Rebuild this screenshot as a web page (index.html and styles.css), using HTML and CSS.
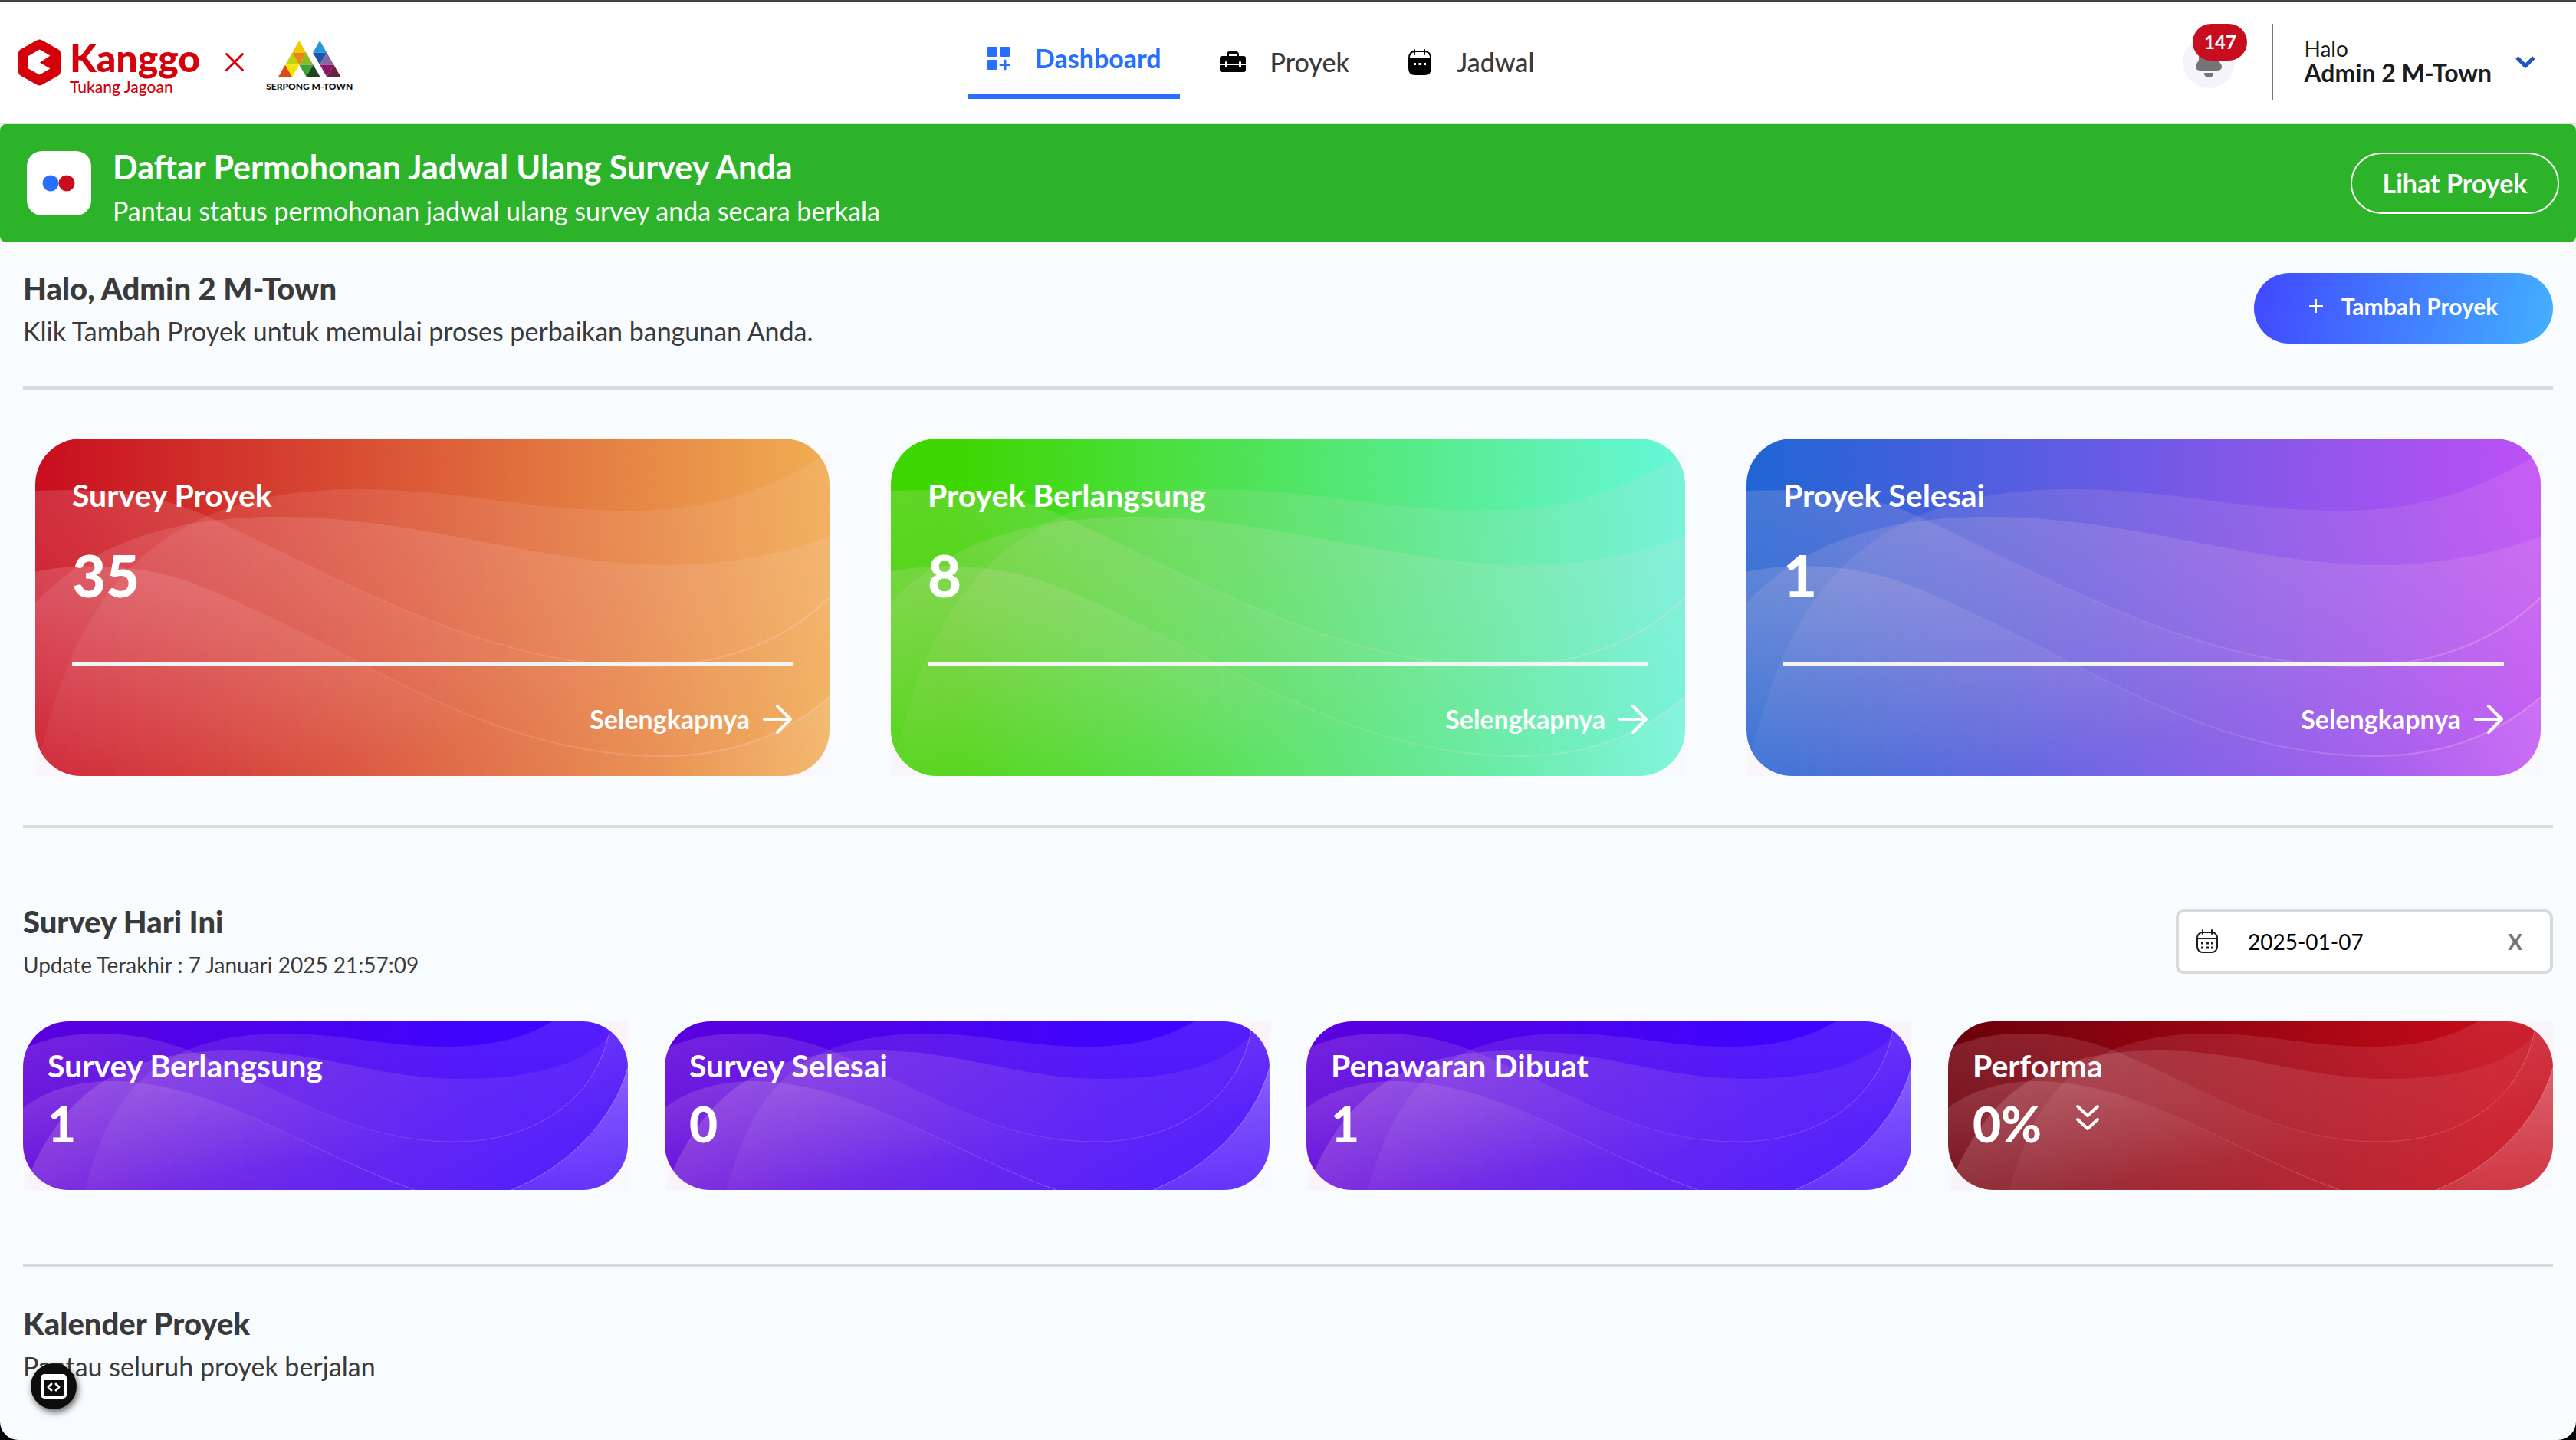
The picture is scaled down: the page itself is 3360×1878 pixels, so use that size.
FILE: index.html
```html
<!DOCTYPE html>
<html lang="id">
<head>
  <meta charset="utf-8">
  <meta name="viewport" content="width=device-width, initial-scale=1">
  <title>Kanggo - Dashboard</title>
  <link rel="stylesheet" href="styles.css">
</head>
<body>
  <!-- Shared wave artwork for the cards -->
  <svg class="defs" width="0" height="0" aria-hidden="true">
    <defs>
      <linearGradient id="fade-side" x1="0" y1="0" x2="0.6" y2="0.8">
        <stop offset="0" stop-color="#ffd8e0" stop-opacity="0.17"/>
        <stop offset="1" stop-color="#ffd8e0" stop-opacity="0"/>
      </linearGradient>
      <linearGradient id="fade-down" x1="0" y1="0" x2="0" y2="1">
        <stop offset="0" stop-color="#ffd0da" stop-opacity="0.12"/>
        <stop offset="1" stop-color="#ffd0da" stop-opacity="0.05"/>
      </linearGradient>
      <linearGradient id="fade-mid" x1="0" y1="0" x2="0" y2="1">
        <stop offset="0" stop-color="#ffd8e0" stop-opacity="0.14"/>
        <stop offset="1" stop-color="#ffd8e0" stop-opacity="0.04"/>
      </linearGradient>
      <linearGradient id="fade-left" x1="0" y1="0" x2="1" y2="0">
        <stop offset="0" stop-color="#ffd8e0" stop-opacity="0.18"/>
        <stop offset="1" stop-color="#ffd8e0" stop-opacity="0.06"/>
      </linearGradient>
      <linearGradient id="fade-line" x1="0" y1="0" x2="1" y2="0">
        <stop offset="0.2" stop-color="#ffd8e0" stop-opacity="0"/>
        <stop offset="1" stop-color="#ffd8e0" stop-opacity="0.3"/>
      </linearGradient>
      <linearGradient id="fade-right" x1="0" y1="0" x2="1" y2="0">
        <stop offset="0" stop-color="#ffffff" stop-opacity="0"/>
        <stop offset="1" stop-color="#ffffff" stop-opacity="0.1"/>
      </linearGradient>
      <linearGradient id="fade-corner" x1="0" y1="0" x2="0" y2="1">
        <stop offset="0" stop-color="#ffffff" stop-opacity="0.26"/>
        <stop offset="1" stop-color="#ffffff" stop-opacity="0.1"/>
      </linearGradient>
    </defs>
    <symbol id="waves-large" viewBox="0 0 1036 440" preserveAspectRatio="none">
      <path fill="url(#fade-down)" d="M0 440C40 260 110 66 419 66C560 66 640 94 776 94C880 94 960 66 1036 18V440Z"/>
      <path fill="url(#fade-mid)" d="M0 214C80 130 190 102 319 102C500 102 660 165 826 165C900 165 980 150 1036 127V440H0Z"/>
      <path fill="url(#fade-side)" d="M0 68C100 64 170 74 236 107C400 184 590 297 790 297C900 297 980 262 1036 207V440H0Z"/>
      <path fill="none" stroke="url(#fade-line)" stroke-width="2" d="M0 68C100 64 170 74 236 107C400 184 590 297 790 297C900 297 980 262 1036 207"/>
      <path fill="url(#fade-side)" d="M0 174C60 160 150 164 220 194C440 286 590 414 819 414C910 414 980 386 1036 337V440H0Z"/>
      <path fill="none" stroke="url(#fade-line)" stroke-width="2" d="M0 174C60 160 150 164 220 194C440 286 590 414 819 414C910 414 980 386 1036 337"/>
      <path fill="url(#fade-right)" d="M819 414C910 414 980 386 1036 337V440H819Z"/>
    </symbol>
    <symbol id="waves-small" viewBox="0 0 789 220" preserveAspectRatio="none">
      <path fill="url(#fade-down)" d="M80 220C110 120 150 16 340 16C420 16 470 33 551 33C605 33 650 24 691 0H789V220Z"/>
      <path fill="url(#fade-left)" d="M0 220C50 90 130 38 275 38C390 38 460 75 575 75C660 75 730 58 767 16L789 0V220Z"/>
      <path fill="url(#fade-side)" d="M0 36C30 22 60 16 99 16C140 16 180 23 219 39C340 90 430 157 562 157C680 157 756 90 767 0H789V220H0Z"/>
      <path fill="none" stroke="url(#fade-line)" stroke-width="1" d="M99 16C140 16 180 23 219 39C340 90 430 157 562 157C680 157 756 90 767 0"/>
      <path fill="url(#fade-side)" d="M0 113C30 90 70 78 115 78C250 78 370 170 511 220H0Z"/>
      <path fill="none" stroke="url(#fade-line)" stroke-width="1" d="M115 78C250 78 370 170 511 220"/>
      <path fill="url(#fade-corner)" d="M637 220C710 190 770 130 789 60V220Z"/>
      <path fill="none" stroke="#ffffff" stroke-opacity="0.3" stroke-width="1" d="M637 220C710 190 770 130 789 60"/>
    </symbol>
    <symbol id="arrow" viewBox="0 0 40 40">
      <path fill="none" stroke="currentColor" stroke-width="4" stroke-linecap="round" stroke-linejoin="round" d="M3 20H37M20 3L37 20L20 37"/>
    </symbol>
  </svg>

  <div class="app">
    <header class="header">
      <a class="brand" href="#">
        <svg class="brand-mark" width="55" height="61" viewBox="0 0 55 61" aria-hidden="true">
          <path fill="#d4000a" stroke="#d4000a" stroke-width="12" stroke-linejoin="round" d="M27.500 6.500L49 18.500V42.500L27.500 54.500L6 42.500V18.500Z"/>
          <path fill="#fff" d="M27.500 13.500L41.500 21.500L28 30.500L41.500 38.500L27.500 46.500L13 38.500V22Z"/>
        </svg>
        <span class="brand-text">
          <span class="brand-name">Kanggo</span>
          <span class="brand-tagline">Tukang Jagoan</span>
        </span>
        <svg class="brand-cross" width="26" height="26" viewBox="0 0 26 26" aria-hidden="true">
          <path stroke="#d4000a" stroke-width="3" stroke-linecap="round" d="M2.500 2.500L23.500 23.500M23.500 2.500L2.500 23.500"/>
        </svg>
        <span class="partner">
          <svg width="82" height="48" viewBox="0 0 82 48" aria-hidden="true">
            <path fill="#edcb00" d="M27.300 0L36.400 15.700H18.200Z"/>
            <path fill="#bfd00f" d="M18.200 15.700L27.300 31.400H9.100Z"/>
            <path fill="#eb8612" d="M18.200 15.700H36.400L27.300 31.400Z"/>
            <path fill="#8abb26" d="M36.400 15.700L45.500 31.400H27.300Z"/>
            <path fill="#dc4a1a" d="M9.100 31.400L18.200 47.200H0Z"/>
            <path fill="#f5e600" d="M9.100 31.400H27.300L18.200 47.200Z"/>
            <path fill="#43a237" d="M27.300 31.400H45.500L36.400 47.200Z"/>
            <path fill="#1b4620" d="M45.500 31.400L54.600 47.200H36.400Z"/>
            <path fill="#2797d8" d="M54.200 0L63.300 15.700H45.100Z"/>
            <path fill="#1a57a8" d="M45.100 15.700H63.300L54.200 31.400Z"/>
            <path fill="#86659f" d="M63.300 15.700L72.400 31.400H54.200Z"/>
            <path fill="#8f146e" d="M54.200 31.400H72.400L63.300 47.200Z"/>
            <path fill="#6a2340" d="M72.400 31.400L81.500 47.200H63.300Z"/>
          </svg>
          <span class="partner-name">SERPONG M-TOWN</span>
        </span>
      </a>

      <nav class="nav">
        <a class="nav-link nav-link-active" href="#">
          <svg width="32" height="32" viewBox="0 0 32 32" fill="currentColor" aria-hidden="true">
            <rect x="1" y="1" width="14" height="13" rx="2"/><rect x="18" y="1" width="14" height="13" rx="2"/><rect x="1" y="18" width="14" height="13" rx="2"/>
            <path fill="none" stroke="currentColor" stroke-width="3" stroke-linecap="round" d="M25 19V30M19 24.500H31"/>
          </svg>
          Dashboard
        </a>
        <a class="nav-link" href="#">
          <svg width="34" height="32" viewBox="0 0 34 32" aria-hidden="true">
            <path fill="none" stroke="#000" stroke-width="3" d="M10.500 10V6Q10.500 3.500 13 3.500H21Q23.500 3.500 23.500 6V10"/>
            <path fill="#000" d="M3 8H31Q34 8 34 11V18H28V16Q28 15 26.500 15Q25 15 25 16V18H10V16Q10 15 8.500 15Q7 15 7 16V18H0V11Q0 8 3 8Z"/>
            <path fill="#000" d="M0 20H7V22Q7 23 8.500 23Q10 23 10 22V20H25V22Q25 23 26.500 23Q28 23 28 22V20H34V26Q34 29 31 29H3Q0 29 0 26Z"/>
          </svg>
          Proyek
        </a>
        <a class="nav-link" href="#">
          <svg width="32" height="36" viewBox="0 0 32 36" aria-hidden="true">
            <path fill="none" stroke="#000" stroke-width="2" stroke-linecap="round" d="M9 2V8M22 2V8"/>
            <path fill="none" stroke="#000" stroke-width="2" d="M2 13Q2 4 10 4H22Q30 4 30 13"/>
            <path fill="#000" d="M1 13H31V26Q31 35 22 35H10Q1 35 1 26Z"/>
            <path fill="#fff" d="M8 19h3v3h-3zM14.500 19h3v3h-3zM21 19h3v3h-3z"/>
          </svg>
          Jadwal
        </a>
      </nav>

      <div class="account">
        <button class="bell" type="button" aria-label="Notifikasi">
          <svg width="36" height="44" viewBox="0 0 36 44" aria-hidden="true">
            <path fill="#757575" d="M18 2C26 2 30 8 30 14V20C30 24 35 25 35 30C35 34 32 35 28 35Q18 36 8 35C4 35 1 34 1 30C1 25 5 24 5 20V14C5 8 10 2 18 2Z"/>
            <path fill="#757575" d="M12 38H24Q24 44 18 44Q12 44 12 38Z"/>
          </svg>
          <span class="bell-count">147</span>
        </button>
        <button class="user" type="button">
          <span class="user-text">
            <span class="user-greeting">Halo</span>
            <strong class="user-name">Admin 2 M-Town</strong>
          </span>
          <svg width="28" height="20" viewBox="0 0 28 20" aria-hidden="true">
            <path fill="none" stroke="#1d55c4" stroke-width="5" stroke-linejoin="round" d="M3 4L14 15L25 4"/>
          </svg>
        </button>
      </div>
    </header>

    <section class="banner">
      <svg class="banner-icon" viewBox="0 0 84 84" aria-hidden="true">
        <circle cx="31" cy="42" r="10.500" fill="#2770ff"/><circle cx="52" cy="42" r="10.500" fill="#c80d1f"/>
      </svg>
      <div class="banner-text">
        <h2 class="banner-title">Daftar Permohonan Jadwal Ulang Survey Anda</h2>
        <p class="banner-note">Pantau status permohonan jadwal ulang survey anda secara berkala</p>
      </div>
      <button class="banner-button" type="button">Lihat Proyek</button>
    </section>

    <main class="main">
      <section class="greeting">
        <div class="heading-group">
          <h1 class="heading">Halo, Admin 2 M-Town</h1>
          <p class="note">Klik Tambah Proyek untuk memulai proses perbaikan bangunan Anda.</p>
        </div>
        <button class="add-button" type="button">
          <svg width="18" height="18" viewBox="0 0 18 18" aria-hidden="true"><path stroke="#fff" stroke-width="2" d="M9 0V18M0 9H18"/></svg>
          Tambah Proyek
        </button>
      </section>

      <section class="projects">
        <article class="project project-red">
          <svg class="waves" aria-hidden="true"><use href="#waves-large"/></svg>
          <h3 class="card-title">Survey Proyek</h3>
          <p class="project-value">35</p>
          <a class="project-link" href="#">Selengkapnya <svg width="40" height="40" aria-hidden="true"><use href="#arrow"/></svg></a>
        </article>
        <article class="project project-green">
          <svg class="waves" aria-hidden="true"><use href="#waves-large"/></svg>
          <h3 class="card-title">Proyek Berlangsung</h3>
          <p class="project-value">8</p>
          <a class="project-link" href="#">Selengkapnya <svg width="40" height="40" aria-hidden="true"><use href="#arrow"/></svg></a>
        </article>
        <article class="project project-blue">
          <svg class="waves" aria-hidden="true"><use href="#waves-large"/></svg>
          <h3 class="card-title">Proyek Selesai</h3>
          <p class="project-value">1</p>
          <a class="project-link" href="#">Selengkapnya <svg width="40" height="40" aria-hidden="true"><use href="#arrow"/></svg></a>
        </article>
      </section>

      <section class="today">
        <div class="today-head">
          <div class="heading-group">
            <h2 class="heading">Survey Hari Ini</h2>
            <p class="note note-small">Update Terakhir : 7 Januari 2025 21:57:09</p>
          </div>
          <div class="date-field">
            <label class="date-icon" for="survey-date" aria-label="Tanggal survey">
              <svg width="30" height="32" viewBox="0 0 30 32" fill="none" stroke="#1c1c1c" stroke-width="2" aria-hidden="true">
                <rect x="2" y="4" width="26" height="26" rx="7"/>
                <path d="M2 12H28"/><path stroke-linecap="round" d="M9 1V6M21 1V6"/>
                <path stroke-width="3" d="M7 18h3M14 18h3M20 18h3M7 24h3M14 24h3M20 24h3"/>
              </svg>
            </label>
            <input class="date-input" id="survey-date" type="text" value="2025-01-07">
            <button class="date-clear" type="button" aria-label="Hapus tanggal">X</button>
          </div>
        </div>

        <div class="stats">
          <article class="stat">
            <svg class="waves" aria-hidden="true"><use href="#waves-small"/></svg>
            <h3 class="card-title">Survey Berlangsung</h3>
            <p class="stat-value">1</p>
          </article>
          <article class="stat">
            <svg class="waves" aria-hidden="true"><use href="#waves-small"/></svg>
            <h3 class="card-title">Survey Selesai</h3>
            <p class="stat-value">0</p>
          </article>
          <article class="stat">
            <svg class="waves" aria-hidden="true"><use href="#waves-small"/></svg>
            <h3 class="card-title">Penawaran Dibuat</h3>
            <p class="stat-value">1</p>
          </article>
          <article class="stat stat-red">
            <svg class="waves" aria-hidden="true"><use href="#waves-small"/></svg>
            <h3 class="card-title">Performa</h3>
            <p class="stat-value">0%
              <svg width="32" height="36" viewBox="0 0 32 36" aria-hidden="true"><path fill="none" stroke="#fff" stroke-width="4" stroke-linecap="round" stroke-linejoin="round" d="M3 3L16 15L29 3M3 20L16 32L29 20"/></svg>
            </p>
          </article>
        </div>
      </section>

      <section class="calendar">
        <div class="heading-group">
          <h2 class="heading">Kalender Proyek</h2>
          <p class="note">Pantau seluruh proyek berjalan</p>
        </div>
      </section>
    </main>

    <button class="dev-button" type="button" aria-label="Alat pengembang">
      <svg width="34" height="32" viewBox="0 0 34 32" fill="none" stroke="#fff" aria-hidden="true">
        <rect x="2" y="2" width="30" height="28" rx="3" stroke-width="4"/>
        <path stroke-width="6" d="M2 5H32"/>
        <path stroke-width="3" stroke-linecap="round" stroke-linejoin="round" d="M14 13L10 17L14 21M20 13L24 17L20 21"/>
      </svg>
    </button>
  </div>
</body>
</html>
```

FILE: styles.css
```css
* {
  box-sizing: border-box;
}

body {
  margin: 0;
  background: #000;
  color: #3a3a3a;
  font-family: Lato, "Open Sans", sans-serif;
  font-size: 34px;
  line-height: 40px;
}

h1, h2, h3, p {
  margin: 0;
}

a {
  color: inherit;
  text-decoration: none;
}

button, input {
  padding: 0;
  border: 0;
  background: none;
  color: inherit;
  font: inherit;
}

svg {
  flex: none;
}

.defs {
  position: absolute;
}

.app {
  min-height: 100vh;
  overflow: hidden;
  border-top: 2px solid #454243;
  border-radius: 0 0 24px 24px;
  background: #f9fcff;
}

/* Header */

.header {
  display: flex;
  align-items: center;
  justify-content: space-between;
  height: 160px;
  padding: 0 52px 0 24px;
  border-bottom: 2px solid #dcdcdc;
  background: #fff;
}

.brand {
  display: flex;
  align-items: center;
}

.brand-text {
  display: flex;
  flex-direction: column;
  margin: 12px 32px 0 12px;
  color: #d4000a;
}

.brand-name {
  font-size: 50px;
  font-weight: 900;
  line-height: 52px;
}

.brand-tagline {
  font-size: 21px;
  font-weight: 500;
  line-height: 24px;
}

.partner {
  display: flex;
  flex-direction: column;
  align-items: center;
  gap: 4px;
  margin: 12px 0 0 28px;
}

.partner-name {
  color: #111;
  font-size: 12px;
  font-weight: 900;
  line-height: 16px;
}

.nav {
  display: flex;
  align-self: stretch;
  align-items: center;
  gap: 28px;
  margin-right: 20px;
}

.nav-link {
  display: flex;
  align-items: center;
  gap: 32px;
  height: 96px;
  padding: 0 24px;
  font-weight: 500;
}

.nav-link-active {
  padding-bottom: 4px;
  border-bottom: 6px solid #2770ff;
  color: #2770ff;
  font-weight: 700;
}

.account {
  display: flex;
  align-items: center;
}

.bell {
  position: relative;
  display: flex;
  align-items: flex-end;
  justify-content: center;
  width: 68px;
  height: 68px;
  padding-bottom: 14px;
  border-radius: 50%;
  background: #f5f4fb;
}

.bell-count {
  position: absolute;
  top: -16px;
  left: 13px;
  width: 71px;
  border-radius: 24px;
  background: #c80d1f;
  color: #fff;
  font-size: 24px;
  font-weight: 700;
  line-height: 48px;
}

.user {
  display: flex;
  align-items: center;
  gap: 30px;
  height: 100px;
  margin-left: 48px;
  padding-left: 40px;
  border-left: 2px solid #757575;
  color: #1c1c1c;
  text-align: left;
}

.user-text {
  display: flex;
  flex-direction: column;
  padding-bottom: 4px;
}

.user-greeting {
  font-size: 28px;
  line-height: 32px;
}

.user-name {
  font-size: 32px;
  line-height: 32px;
}

/* Banner */

.banner {
  display: flex;
  align-items: center;
  gap: 28px;
  padding: 27px 22px 27px 35px;
  border-radius: 8px;
  background: #2db32a;
  color: #fff;
}

.banner-icon {
  width: 84px;
  height: 84px;
  border-radius: 20px;
  background: #fff;
}

.banner-text {
  display: flex;
  flex: 1;
  flex-direction: column;
  gap: 14px;
}

.banner-title {
  font-size: 43px;
  line-height: 58px;
}

.banner-note {
  line-height: 28px;
}

.banner-button {
  width: 272px;
  height: 80px;
  border: 2px solid #fff;
  border-radius: 40px;
  font-weight: 700;
}

/* Main sections */

.main {
  padding: 0 30px;
}

.heading-group {
  display: flex;
  flex-direction: column;
  gap: 12px;
}

.heading {
  font-size: 40px;
  font-weight: 900;
  line-height: 48px;
}

.note-small {
  font-size: 28px;
}

.greeting {
  display: flex;
  align-items: center;
  justify-content: space-between;
  padding: 36px 0 52px;
  border-bottom: 4px solid #dadada;
}

.add-button {
  display: flex;
  align-items: center;
  justify-content: center;
  gap: 24px;
  width: 390px;
  height: 92px;
  padding-bottom: 6px;
  border-radius: 46px;
  background: linear-gradient(100deg, #4148ff, #43b0ff);
  color: #fff;
  font-size: 30px;
  font-weight: 700;
}

.projects {
  display: grid;
  grid-template-columns: repeat(3, 1fr);
  gap: 80px;
  padding: 64px 16px;
  border-bottom: 4px solid #dadada;
}

.project,
.stat {
  position: relative;
  display: flex;
  flex-direction: column;
  border-radius: 60px;
  color: #fff;
}

.project > *,
.stat > * {
  position: relative;
}

.project > .waves,
.stat > .waves {
  position: absolute;
  inset: 0;
  width: 100%;
  height: 100%;
}

.card-title {
  font-size: 41px;
  line-height: 52px;
}

.project {
  padding: 48px 48px 50px;
}

.project-red {
  background: linear-gradient(90deg, #c80d1f, #f0ae52);
}

.project-green {
  background: linear-gradient(90deg, #3ed600 8%, #66f7da);
}

.project-blue {
  background: linear-gradient(90deg, #1f65d3, #be50f6);
}

.project-value {
  margin: 38px 0 74px;
  font-size: 76px;
  font-weight: 900;
  line-height: 80px;
}

.project-link {
  display: flex;
  align-items: center;
  justify-content: flex-end;
  gap: 16px;
  padding-top: 46px;
  border-top: 4px solid #f4f4f4;
  font-weight: 700;
  line-height: 48px;
}

.today {
  padding: 98px 0 96px;
  border-bottom: 4px solid #dadada;
}

.today-head {
  display: flex;
  align-items: center;
  justify-content: space-between;
  margin-bottom: 54px;
}

.date-field {
  display: flex;
  align-items: center;
  width: 492px;
  height: 84px;
  padding: 0 36px 0 22px;
  border: 4px solid #dadada;
  border-radius: 10px;
  background: #fff;
}

.date-icon {
  display: flex;
  margin-right: 38px;
}

.date-input {
  flex: 1;
  min-width: 0;
  color: #000;
  font-size: 28px;
}

.date-clear {
  color: #757575;
  font-size: 28px;
  font-weight: 700;
}

.stats {
  display: grid;
  grid-template-columns: repeat(4, 1fr);
  gap: 48px;
}

.stat {
  gap: 18px;
  padding: 32px 32px 54px;
  background: linear-gradient(90deg, #5a00dc, #3d05ff 80%);
}

.stat-red {
  background: linear-gradient(90deg, #6c000b, #c40a18 90%);
}

.stat-value {
  display: flex;
  align-items: center;
  gap: 44px;
  font-size: 64px;
  font-weight: 900;
  line-height: 64px;
}

.stat-value svg {
  margin-bottom: 16px;
}

.calendar {
  padding: 50px 0 72px;
}

.dev-button {
  position: fixed;
  bottom: 40px;
  left: 40px;
  display: flex;
  align-items: center;
  justify-content: center;
  width: 60px;
  height: 60px;
  border-radius: 50%;
  background: #0d0d0d;
  box-shadow: 2px 4px 8px rgba(0, 0, 0, 0.6);
}
```
